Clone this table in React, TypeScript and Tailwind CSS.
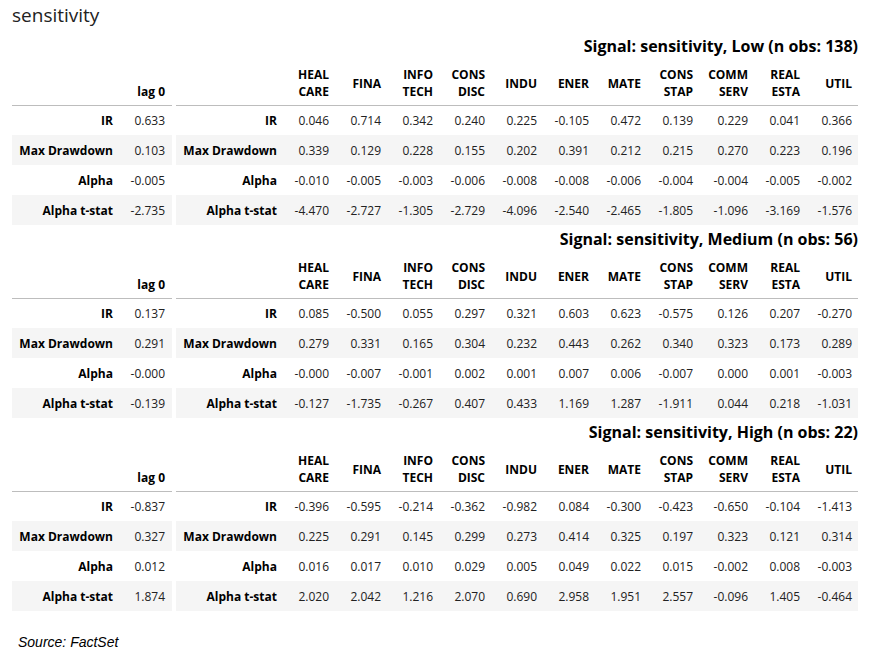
import React from "react";

type Row = { label: string; lag: string; vals: string[] };
type Section = { title: string; rows: Row[] };

const sectors: [string, string?][] = [
  ["HEAL", "CARE"],
  ["FINA"],
  ["INFO", "TECH"],
  ["CONS", "DISC"],
  ["INDU"],
  ["ENER"],
  ["MATE"],
  ["CONS", "STAP"],
  ["COMM", "SERV"],
  ["REAL", "ESTA"],
  ["UTIL"],
];

const colW = [52, 52, 52, 52, 52, 52, 52, 52, 55, 52, 52];

const sections: Section[] = [
  {
    title: "Signal: sensitivity, Low (n obs: 138)",
    rows: [
      { label: "IR", lag: "0.633", vals: ["0.046", "0.714", "0.342", "0.240", "0.225", "-0.105", "0.472", "0.139", "0.229", "0.041", "0.366"] },
      { label: "Max Drawdown", lag: "0.103", vals: ["0.339", "0.129", "0.228", "0.155", "0.202", "0.391", "0.212", "0.215", "0.270", "0.223", "0.196"] },
      { label: "Alpha", lag: "-0.005", vals: ["-0.010", "-0.005", "-0.003", "-0.006", "-0.008", "-0.008", "-0.006", "-0.004", "-0.004", "-0.005", "-0.002"] },
      { label: "Alpha t-stat", lag: "-2.735", vals: ["-4.470", "-2.727", "-1.305", "-2.729", "-4.096", "-2.540", "-2.465", "-1.805", "-1.096", "-3.169", "-1.576"] },
    ],
  },
  {
    title: "Signal: sensitivity, Medium (n obs: 56)",
    rows: [
      { label: "IR", lag: "0.137", vals: ["0.085", "-0.500", "0.055", "0.297", "0.321", "0.603", "0.623", "-0.575", "0.126", "0.207", "-0.270"] },
      { label: "Max Drawdown", lag: "0.291", vals: ["0.279", "0.331", "0.165", "0.304", "0.232", "0.443", "0.262", "0.340", "0.323", "0.173", "0.289"] },
      { label: "Alpha", lag: "-0.000", vals: ["-0.000", "-0.007", "-0.001", "0.002", "0.001", "0.007", "0.006", "-0.007", "0.000", "0.001", "-0.003"] },
      { label: "Alpha t-stat", lag: "-0.139", vals: ["-0.127", "-1.735", "-0.267", "0.407", "0.433", "1.169", "1.287", "-1.911", "0.044", "0.218", "-1.031"] },
    ],
  },
  {
    title: "Signal: sensitivity, High (n obs: 22)",
    rows: [
      { label: "IR", lag: "-0.837", vals: ["-0.396", "-0.595", "-0.214", "-0.362", "-0.982", "0.084", "-0.300", "-0.423", "-0.650", "-0.104", "-1.413"] },
      { label: "Max Drawdown", lag: "0.327", vals: ["0.225", "0.291", "0.145", "0.299", "0.273", "0.414", "0.325", "0.197", "0.323", "0.121", "0.314"] },
      { label: "Alpha", lag: "0.012", vals: ["0.016", "0.017", "0.010", "0.029", "0.005", "0.049", "0.022", "0.015", "-0.002", "0.008", "-0.003"] },
      { label: "Alpha t-stat", lag: "1.874", vals: ["2.020", "2.042", "1.216", "2.070", "0.690", "2.958", "1.951", "2.557", "-0.096", "1.405", "-0.464"] },
    ],
  },
];

const SignalBlock = ({ section }: { section: Section }) => {
  return (
    <div>
      <div className="w-[846px] text-right font-bold text-[16px] leading-[20px] text-black">
        {section.title}
      </div>

      <div className="flex gap-1">
        {/* lag table */}
        <table className="border-collapse table-fixed w-[160px] text-[12px] leading-[17px]">
          <colgroup>
            <col className="w-[107px]" />
            <col className="w-[53px]" />
          </colgroup>
          <thead>
            <tr className="h-[49px] border-b border-[#bdbdbd]">
              <th></th>
              <th className="text-right align-bottom font-bold pb-[5px] pr-[7px]">lag 0</th>
            </tr>
          </thead>
          <tbody>
            {section.rows.map((row, i) => (
              <tr key={row.label} className={`h-[30px] ${i % 2 === 1 ? "bg-[#f5f5f5]" : ""}`}>
                <td className="text-right font-bold pr-[6px] whitespace-nowrap">{row.label}</td>
                <td className="text-right pr-[7px] text-[#222]">{row.lag}</td>
              </tr>
            ))}
          </tbody>
        </table>

        {/* sector table */}
        <table className="border-collapse table-fixed w-[682px] text-[12px] leading-[17px]">
          <colgroup>
            <col className="w-[107px]" />
            {colW.map((w, i) => (
              <col key={i} style={{ width: w }} />
            ))}
          </colgroup>
          <thead>
            <tr className="h-[49px] border-b border-[#bdbdbd]">
              <th></th>
              {sectors.map((s, i) => (
                <th key={i} className="text-right align-bottom font-bold pb-[5px] pr-[6px]">
                  {s[1] ? (
                    <>
                      {s[0]}
                      <br />
                      {s[1]}
                    </>
                  ) : (
                    <span className="inline-block pb-[8px]">{s[0]}</span>
                  )}
                </th>
              ))}
            </tr>
          </thead>
          <tbody>
            {section.rows.map((row, i) => (
              <tr key={row.label} className={`h-[30px] ${i % 2 === 1 ? "bg-[#f5f5f5]" : ""}`}>
                <td className="text-right font-bold pr-[6px] whitespace-nowrap">{row.label}</td>
                {row.vals.map((v, j) => (
                  <td key={j} className="text-right pr-[6px] text-[#222]">
                    {v}
                  </td>
                ))}
              </tr>
            ))}
          </tbody>
        </table>
      </div>
    </div>
  );
};

export default function App() {
  return (
    <div className="w-[873px] h-[654px] bg-white pl-3 pt-[3px] font-['Open_Sans',sans-serif] text-black">
      <div className="text-[19px] leading-[24px] font-normal text-[#222]">sensitivity</div>

      <div className="mt-[9px] flex flex-col gap-1">
        {sections.map((s) => (
          <SignalBlock key={s.title} section={s} />
        ))}
      </div>

      <div className="mt-[21px] pl-[6px] italic text-[14px] leading-[20px] font-['Liberation_Sans',sans-serif] text-black">
        Source: FactSet
      </div>
    </div>
  );
}
